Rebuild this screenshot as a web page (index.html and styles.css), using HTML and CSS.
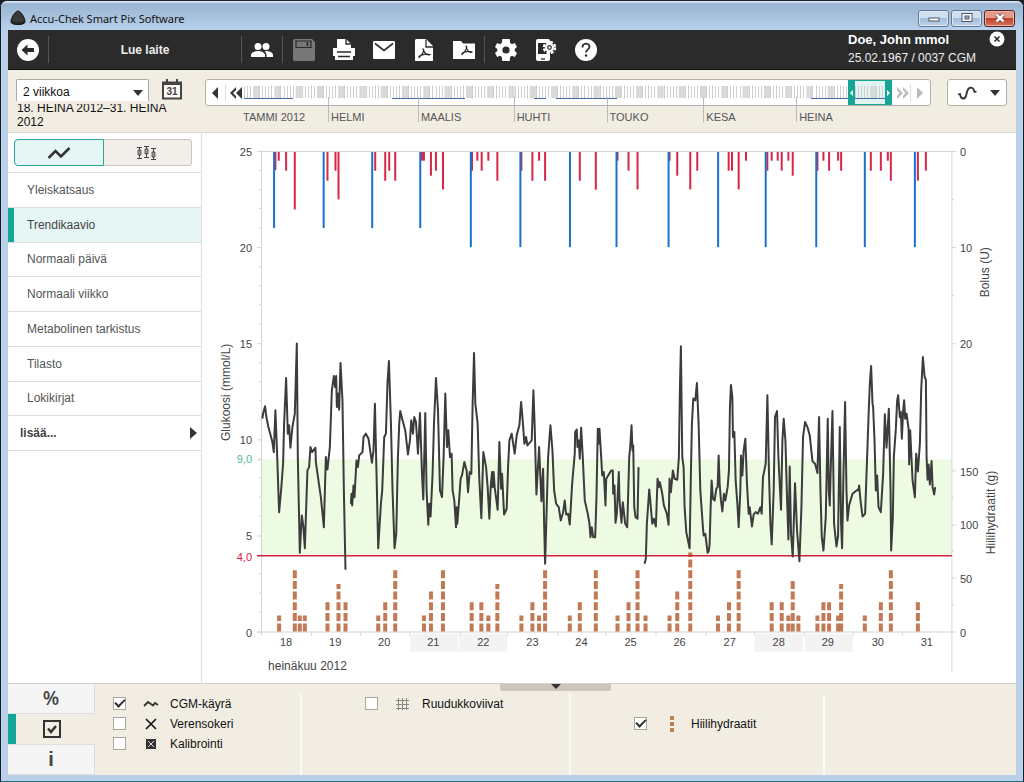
FILE: index.html
```html
<!DOCTYPE html>
<html lang="fi">
<head>
<meta charset="utf-8">
<title>Accu-Chek Smart Pix Software</title>
<link rel="stylesheet" href="styles.css">
</head>
<body>
<div class="window">
  <header class="titlebar">
    <svg class="app-icon" width="16" height="16" viewBox="0 0 16 16"><path d="M8 1C5 1.500 .8 8 1 12c.3 3.500 13.700 3.500 14 0C15.200 8 11 1.500 8 1z" fill="#3a3a3a" stroke="#111"/><path d="M2 12c2 2 10 2 12 0" fill="none" stroke="#222" stroke-width="2"/></svg>
    <span class="app-title">Accu-Chek Smart Pix Software</span>
    <button class="win-btn" aria-label="Minimize"><svg width="14" height="12" viewBox="0 0 14 12"><rect x="2" y="6" width="10" height="3" fill="#fff" stroke="#4a5568"/></svg></button>
    <button class="win-btn" aria-label="Maximize"><svg width="14" height="12" viewBox="0 0 14 12"><rect x="2" y="1.500" width="10" height="8" fill="#fff" stroke="#4a5568"/><rect x="5" y="4" width="4" height="3" fill="#9db5d3" stroke="#4a5568"/></svg></button>
    <button class="win-btn win-close" aria-label="Close"><svg width="14" height="12" viewBox="0 0 14 12"><path d="M3.500 2.500l7 7M10.500 2.500l-7 7" stroke="#5a3a3a" stroke-width="4"/><path d="M3.500 2.500l7 7M10.500 2.500l-7 7" stroke="#fff" stroke-width="2.500"/></svg></button>
  </header>

  <div class="toolbar">
    <button class="tool" aria-label="Takaisin"><svg width="24" height="24" viewBox="0 0 24 24"><circle cx="12" cy="12" r="11" fill="#fff"/><path d="M5.500 12l6-5.500v3.500h6.500v4h-6.500v3.500z" fill="#2b2b2b"/></svg></button>
    <button class="read-device">Lue laite</button>
    <button class="tool" aria-label="Potilaat"><svg width="24" height="24" viewBox="0 0 24 24" fill="#fff"><circle cx="8" cy="8.500" r="3.500"/><circle cx="16" cy="8.500" r="3.500"/><path d="M1 19v-2c0-2.500 4-4 7-4s7 1.500 7 4v2zM16.500 19v-2c0-1.600-.8-2.900-2-3.900 3.500-.4 8.500 1 8.500 3.900v2z"/></svg></button>
    <div class="tool-group">
      <button class="tool" aria-label="Tallenna"><svg width="24" height="24" viewBox="0 0 24 24"><path d="M3 1h17l3 3v17a2 2 0 0 1-2 2H3a2 2 0 0 1-2-2V3a2 2 0 0 1 2-2z" fill="#777"/><path d="M4 3h15v6.500H4z" fill="none" stroke="#2b2b2b" stroke-width="1.200"/><path d="M15.500 4v4" stroke="#2b2b2b" stroke-width="1.600"/></svg></button>
      <button class="tool" aria-label="Tulosta"><svg width="24" height="24" viewBox="0 0 24 24"><path d="M1 10h4v4h14v-4h4v8h-2v4H3v-4H1z" fill="#fff"/><path d="M5 1h9l5 5v9H5z" fill="#fff"/><path d="M14 1v5h5M5 14h14M6 18.500h12" fill="none" stroke="#2b2b2b" stroke-width="1.300"/></svg></button>
      <button class="tool" aria-label="Sähköposti"><svg width="24" height="24" viewBox="0 0 24 24"><rect x="1" y="3" width="22" height="18" rx="1" fill="#fff"/><path d="M3 5.500l9 7 9-7" fill="none" stroke="#2b2b2b" stroke-width="1.600"/></svg></button>
      <button class="tool" aria-label="PDF"><svg width="24" height="24" viewBox="0 0 24 24"><path d="M4 1h10l7 7v15H3V2z" fill="#fff"/><path d="M14 1.500V9h7" fill="none" stroke="#2b2b2b" stroke-width="1.300"/><path d="M11 11c2 0 0 5-4 8.500-1-2 6-4 11-3-2 1.500-6-1-7-5.500z" fill="none" stroke="#2b2b2b" stroke-width="1.200"/></svg></button>
      <button class="tool" aria-label="PDF-kansio"><svg width="24" height="24" viewBox="0 0 24 24"><path d="M1 3h8l2 2.500h12V21H1z" fill="#fff"/><path d="M14 8c2 0 0 5-4 8.500-1-2 6-4 10-2.500-2 1.500-5-1-6-6z" fill="none" stroke="#2b2b2b" stroke-width="1.200"/></svg></button>
    </div>
    <div class="tool-group">
      <button class="tool" aria-label="Asetukset"><svg width="24" height="24" viewBox="0 0 24 24"><path fill="#fff" d="M20.700 13.100a9 9 0 0 0 0-2.200l2.300-1.800-2.200-4-2.800 1.100a8 8 0 0 0-1.900-1.100L15.700 1H8.300l-.5 4.100a8 8 0 0 0-1.900 1.100L3.200 5.100l-2.200 4 2.300 1.800a9 9 0 0 0 0 2.200L1 14.900l2.200 4 2.700-1.100a8 8 0 0 0 1.900 1.100l.5 4.100h7.400l.4-4.100a8 8 0 0 0 1.900-1.100l2.800 1.100 2.200-4z"/><circle cx="12" cy="12" r="3.600" fill="#2b2b2b"/></svg></button>
      <button class="tool" aria-label="Laitteen asetukset"><svg width="24" height="24" viewBox="0 0 24 24"><rect x="2" y="1" width="14" height="22" rx="2" fill="#fff"/><path d="M4 5h9v11H4z" fill="#2b2b2b"/><path d="M7 21h4" stroke="#2b2b2b" stroke-width="1.300"/><circle cx="15.500" cy="9.500" r="4.500" fill="#fff"/><circle cx="15.500" cy="9.500" r="5.500" fill="none" stroke="#fff" stroke-width="2.500" stroke-dasharray="2.800 1.520"/><circle cx="15.500" cy="9.500" r="1.800" fill="none" stroke="#2b2b2b" stroke-width="1.200"/></svg></button>
      <button class="tool" aria-label="Ohje"><svg width="24" height="24" viewBox="0 0 24 24"><circle cx="12" cy="12" r="11" fill="#fff"/><path d="M8.500 9.500c0-5 7-5 7-.8 0 2.600-3.500 2.800-3.500 5.800" fill="none" stroke="#2b2b2b" stroke-width="1.800"/><circle cx="12" cy="17.500" r="1.200" fill="#2b2b2b"/></svg></button>
    </div>
    <div class="patient">
      <strong class="patient-name">Doe, John mmol</strong>
      <span>25.02.1967 / 0037 CGM</span>
    </div>
    <button class="patient-close" aria-label="Sulje potilas"><svg width="16" height="16" viewBox="0 0 16 16"><circle cx="8" cy="8" r="7.500" fill="#fff"/><path d="M5.500 5.500l5 5M10.500 5.500l-5 5" stroke="#2b2b2b" stroke-width="1.600"/></svg></button>
  </div>

  <div class="filters">
    <div class="period">
      <select class="period-select" aria-label="Ajanjakso"><option>2 viikkoa</option></select>
      <div class="period-range"><span>18. HEINA 2012–31. HEINA 2012</span></div>
    </div>
    <button class="plain calendar" aria-label="Kalenteri"><svg width="20" height="22" viewBox="0 0 20 22"><path d="M1 3.500h18v16H1z" fill="#fbf9f5" stroke="#444" stroke-width="2"/><path d="M1 3h18v3H1zM4 0h2v4H4zM14 0h2v4h-2z" fill="#444"/><text x="10" y="16" class="cal-day">31</text></svg></button>
    <div class="timeline">
      <div class="timeline-box">
        <button class="plain tl-prev" aria-label="Edellinen"><svg width="7" height="12" viewBox="0 0 7 12"><path d="M6 0v12L0 6z" fill="#333"/></svg></button>
        <button class="plain tl-prev2" aria-label="Alkuun"><svg width="13" height="12" viewBox="0 0 13 12"><path d="M6 0v3L3 6l3 3v3L0 6zM12 0v12L6 6z" fill="#333"/></svg></button>
        <svg class="strip" id="strip" viewBox="243 80 650 25" preserveAspectRatio="none"></svg>
        <button class="plain tl-next2" aria-label="Loppuun"><svg width="12" height="12" viewBox="0 0 12 12"><path d="M0 0l6 6-6 6V9l2.500-3L0 3zM6 0l6 6-6 6V9l2.500-3L6 3z" fill="#bbb"/></svg></button>
        <button class="plain tl-next" aria-label="Seuraava"><svg width="6" height="12" viewBox="0 0 6 12"><path d="M0 0v12l6-6z" fill="#bbb"/></svg></button>
      </div>
      <div class="months">
        <span class="month m-tammi">TAMMI 2012</span><span class="month m-helmi">HELMI</span><span class="month m-maalis">MAALIS</span><span class="month m-huhti">HUHTI</span><span class="month m-touko">TOUKO</span><span class="month m-kesa">KESA</span><span class="month m-heina">HEINA</span>
      </div>
    </div>
    <button class="curve-menu" aria-label="Käyrä"><svg width="20" height="16" viewBox="0 0 20 16"><path d="M1 9.500L3 9C4 15 8.500 15 9.500 9S13 1.500 16 3.500c1 .7 1.200 2 1.500 3.500l2-.5" fill="none" stroke="#333" stroke-width="1.800"/></svg><svg width="10" height="6" viewBox="0 0 10 6"><path d="M0 0h10L5 6z" fill="#333"/></svg></button>
  </div>

  <main class="content">
    <aside class="sidebar">
      <div class="view-tabs">
        <button class="view-tab active" aria-label="Käyrä"><svg width="24" height="14" viewBox="0 0 24 14"><path d="M1.500 12l7-7 5.500 5.500L22.500 2" fill="none" stroke="#333" stroke-width="2.500"/></svg></button>
        <button class="view-tab" aria-label="Laatikot"><svg width="20" height="14" viewBox="0 0 20 14"><path d="M0 1.500h5M0 12.500h5M2.500 1v12M7 .5h5M7 11.500h5M9.500 0v12M14 2.500h5M14 13.500h5M16.500 2v12" stroke="#444" fill="none"/><path d="M1 4h3v5H1zM8 3h3v5H8zM15 6h3v5h-3z" fill="#999" stroke="#444" stroke-width=".8"/></svg></button>
      </div>
      <nav class="menu">
        <a href="#" class="item">Yleiskatsaus</a>
        <a href="#" class="item current">Trendikaavio</a>
        <a href="#" class="item">Normaali päivä</a>
        <a href="#" class="item">Normaali viikko</a>
        <a href="#" class="item">Metabolinen tarkistus</a>
        <a href="#" class="item">Tilasto</a>
        <a href="#" class="item">Lokikirjat</a>
        <a href="#" class="item more">lisää...<svg width="7" height="12" viewBox="0 0 7 12"><path d="M0 0v12l7-6z" fill="#333"/></svg></a>
      </nav>
    </aside>
    <section class="chart-panel">
      <svg class="chart" id="chart" viewBox="203 133 813 549" role="img" aria-label="Trendikaavio"></svg>
    </section>
  </main>

  <footer class="legend">
    <button class="legend-handle" aria-label="Piilota"><svg width="10" height="5" viewBox="0 0 10 5"><path d="M0 0h10L5 5z" fill="#333"/></svg></button>
    <div class="legend-tabs">
      <button class="legend-tab percent">%</button>
      <button class="legend-tab selected" aria-label="Valinnat"><svg width="18" height="18" viewBox="0 0 18 18"><rect x="1" y="1" width="16" height="16" fill="none" stroke="#333" stroke-width="2"/><path d="M5 8.500l3 3.500 5-6" fill="none" stroke="#333" stroke-width="2.500"/></svg></button>
      <button class="legend-tab">i</button>
    </div>
    <div class="legend-col first">
      <label class="opt"><input type="checkbox" class="box" checked><span class="sym"><svg width="16" height="8" viewBox="0 0 16 8"><path d="M1 6l4-4 5 3.500L12 3l3 2" fill="none" stroke="#333" stroke-width="1.800"/></svg></span>CGM-käyrä</label>
      <label class="opt"><input type="checkbox" class="box"><span class="sym"><svg width="12" height="12" viewBox="0 0 12 12"><path d="M1 1l10 10M11 1L1 11" stroke="#111" stroke-width="1.600"/></svg></span>Verensokeri</label>
      <label class="opt"><input type="checkbox" class="box"><span class="sym"><svg width="10" height="10" viewBox="0 0 10 10"><path d="M0 0h10v10H0z" fill="#333"/><path d="M2 2l6 6M8 2L2 8" stroke="#ddd"/></svg></span>Kalibrointi</label>
    </div>
    <div class="legend-col second">
      <label class="opt"><input type="checkbox" class="box"><span class="sym"><svg width="14" height="12" viewBox="0 0 14 12"><path d="M0 2.500h13M0 6.500h13M0 10.500h13M2.500 0v12M6.500 0v12M10.500 0v12" stroke="#888"/></svg></span>Ruudukkoviivat</label>
    </div>
    <div class="legend-col third">
      <label class="opt"><input type="checkbox" class="box" checked><span class="sym"><svg width="4" height="16" viewBox="0 0 4 16"><path d="M0 0h4v4H0zM0 6h4v4H0zM0 12h4v4H0z" fill="#c17a55"/></svg></span>Hiilihydraatit</label>
    </div>
    <div class="legend-col last"></div>
  </footer>
</div>
<script src="chart.js"></script>
</body>
</html>
```
FILE: styles.css
```css
* { box-sizing: border-box; }
body { margin: 0; background: #1a1f26; font-family: "Liberation Sans", Arial, sans-serif; font-size: 12px; color: #222; }
button { font: inherit; color: inherit; padding: 0; cursor: pointer; }
svg { display: block; }
.plain { border: 0; background: none; }

.window { min-height: 100vh; display: flex; flex-direction: column; padding: 0 7px 6px; background: #b9d0e8; border: 1px solid #14202c; border-bottom: 2px solid #1b6f80; border-radius: 7px 7px 0 0; }
.titlebar { height: 29px; margin: 0 -7px; padding: 5px 8px 0 9px; display: flex; align-items: center; gap: 2px; background: linear-gradient(#e8f1fa 0, #99b4d1 3px, #b8d1ec); border-radius: 6px 6px 0 0; }
.app-title { flex: 1; margin-left: 2px; font-family: "Noto Sans", "Open Sans", sans-serif; font-size: 11px; color: #111; }
.win-btn { width: 31px; height: 17px; display: flex; align-items: center; justify-content: center; border: 1px solid #5f7895; border-radius: 3px; background: linear-gradient(#cfdff0 50%, #a5bedb 50%, #bdd3ec); box-shadow: inset 0 0 0 1px #dfeaf6; }
.win-close { border-color: #5c1f1c; background: linear-gradient(#e29a8b 50%, #c3402b 50%, #d4745c); box-shadow: inset 0 0 0 1px #eab3a7; }

.toolbar { height: 40px; display: flex; align-items: stretch; background: #2b2b2b; border-bottom: 1px solid #111; color: #fff; position: relative; }
.tool { width: 40px; display: flex; align-items: center; justify-content: center; border: 0; background: none; }
.read-device { width: 194px; margin: 6px 0; border: solid #555; border-width: 0 1px; background: none; font-weight: bold; color: #eee; }
.tool-group { display: flex; padding-left: 2px; position: relative; }
.tool-group::before { content: ""; position: absolute; left: 0; top: 6px; bottom: 6px; border-left: 1px solid #555; }
.patient { margin-left: auto; width: 168px; padding-top: 1px; line-height: 18px; display: flex; flex-direction: column; color: #eee; white-space: nowrap; }
.patient-name { font-size: 13px; color: #fff; }
.patient-close { position: absolute; right: 11px; top: 1px; border: 0; background: none; }

.filters { height: 63px; display: flex; align-items: flex-start; padding: 9px 9px 0 8px; background: #f2ede3; border-bottom: 1px solid #dcd8d0; }
.period { width: 154px; flex: none; margin-right: -8px; position: relative; }
.period::after { content: ""; position: absolute; left: 117px; top: 11px; border: 5px solid transparent; border-top: 6px solid #333; border-bottom: 0; pointer-events: none; }
.period-select { appearance: none; display: block; width: 133px; height: 22px; padding: 3px 6px 0; border: 1px solid #aaa; border-bottom: 0; border-radius: 2px 2px 0 0; font: inherit; color: #111; background: #fff; }
.period-range { height: 22px; margin-top: 3px; padding-left: 1px; display: flex; align-items: center; overflow: hidden; line-height: 14px; color: #111; }
.calendar { width: 20px; flex: none; margin-right: 23px; }
.cal-day { font-size: 10px; font-weight: bold; text-anchor: middle; fill: #444; }
.timeline { flex: 1; display: grid; min-width: 0; }
.timeline-box, .months { grid-area: 1 / 1; }
.timeline-box { height: 27px; display: flex; align-items: center; background: #fff; border: 1px solid #b5b1a8; border-radius: 3px; }
.tl-prev { width: 20px; height: 17px; padding-left: 6px; border-right: 1px solid #ddd; }
.tl-prev2 { width: 17px; padding-left: 4px; }
.strip { flex: 1; min-width: 0; height: 25px; }
.tl-next2 { width: 18px; height: 17px; padding-left: 4px; border-right: 1px solid #ddd; }
.tl-next { width: 19px; padding-left: 6px; }
.months { height: 43px; padding-left: 38px; display: flex; align-items: flex-end; pointer-events: none; }
.month { flex: 1 1 0; min-width: 0; height: 25px; padding: 14px 0 0 2px; border-left: 1px solid #bbb; font-size: 11px; line-height: 13px; color: #555; white-space: nowrap; }
.m-tammi { flex-grow: 87; border-left: 0; padding-left: 0; }
.m-helmi { flex-grow: 89; }
.m-maalis { flex-grow: 95; }
.m-huhti { flex-grow: 92; }
.m-touko { flex-grow: 96; }
.m-kesa { flex-grow: 92; }
.m-heina { flex-grow: 135; }
.curve-menu { width: 60px; height: 27px; margin-left: 17px; flex: none; display: flex; align-items: center; justify-content: space-between; padding: 0 6px 0 9px; background: #fff; border: 1px solid #b5b1a8; border-radius: 3px; }

.content { flex: 1; display: flex; background: #fff; }
.sidebar { width: 194px; flex: none; border-right: 1px solid #ddd; }
.view-tabs { height: 39px; display: flex; padding: 6px 9px 6px 6px; }
.view-tab { flex: 1; display: flex; align-items: center; justify-content: center; border: 1px solid #c9c4be; border-left: 0; border-radius: 0 4px 4px 0; background: #f2eeea; }
.view-tab.active { border: 1px solid #2ba39a; border-radius: 4px 0 0 4px; background: #e6f6f5; }
.menu { height: 279px; display: grid; grid-auto-rows: 1fr; border-top: 1px solid #ddd; }
.item { display: flex; align-items: center; justify-content: space-between; padding: 0 4px 0 19px; border-bottom: 1px solid #ddd; color: #555; text-decoration: none; }
.item.current { box-shadow: inset 6px 0 #12a598; background: #e6f6f5; color: #444; }
.item.more { padding-left: 12px; font-weight: bold; color: #444; }
.chart-panel { flex: 1; min-width: 0; }
.chart { width: 100%; height: auto; }

.axis { stroke: #d4d4d4; fill: none; }
.zone { fill: #edfbe3; }
.limit { stroke: #d4213f; stroke-width: 1.4; }
.weekend { fill: #f3f3f3; }
.lbl { font-size: 11px; fill: #444; }
.lbl-end { text-anchor: end; }
.lbl-mid { text-anchor: middle; }
.lbl-title { font-size: 12px; }
.lbl-high { fill: #4fc096; }
.lbl-low { fill: #d4213f; }
.basal { stroke: #1872cc; stroke-width: 2; }
.bolus { stroke: #d6274a; stroke-width: 2; }
.carbs { stroke: #c17a55; stroke-width: 4; stroke-dasharray: 8 2.66; }
.cgm { fill: none; stroke: #3c3c3c; stroke-width: 2; stroke-linejoin: round; }

.legend { height: 92px; display: grid; grid-template-columns: 87px 207fr 269fr 254fr 191fr; background: #f2ede3; border-top: 1px solid #d5d2ca; position: relative; }
.legend-handle { position: absolute; top: 0; left: calc(50% - 12px); width: 111px; height: 7px; border: 0; border-radius: 0 0 2px 2px; background: #cbc5ba; display: flex; justify-content: center; }
.legend-tabs { display: grid; grid-template-rows: 30px 31px 1fr; }
.legend-tab { display: flex; align-items: center; justify-content: center; border: solid #ddd; border-width: 0 1px 1px 0; background: #f5f5f5; font-size: 20px; font-weight: bold; color: #444; }
.legend-tab.percent { font-family: "Open Sans", "Noto Sans", sans-serif; font-size: 19px; font-weight: 600; }
.legend-tab.selected { box-shadow: inset 8px 0 #12a598; border-right: 0; background: #f2ede3; }
.legend-col { margin-top: 10px; border-right: 2px solid #fbf9f5; }
.first { padding-left: 18px; }
.second { padding-left: 63px; }
.third { padding: 20px 0 0 63px; }
.last { border-right: 0; }
.opt { height: 20px; display: flex; align-items: center; color: #111; }
.box { appearance: none; width: 13px; height: 13px; margin: 0; border: 1px solid #aaa69e; background: #fff; display: grid; place-items: center; }
.box:checked::before { content: ""; width: 8px; height: 4px; margin-bottom: 3px; border: solid #333; border-width: 0 0 2px 2px; transform: rotate(-45deg); }
.sym { width: 44px; padding-left: 6px; display: flex; justify-content: center; }
```
FILE: chart.js
```js
const NS = 'http://www.w3.org/2000/svg';
const chart = document.getElementById('chart');
const strip = document.getElementById('strip');

function add(parent, tag, attrs, text) {
  const el = document.createElementNS(NS, tag);
  for (const k in attrs) el.setAttribute(k, attrs[k]);
  if (text !== undefined) el.textContent = text;
  parent.appendChild(el);
  return el;
}
const line = (cls, x1, y1, x2, y2) => add(chart, 'line', { class: cls, x1, y1, x2, y2 });
const label = (cls, x, y, t, extra) => add(chart, 'text', Object.assign({ class: 'lbl ' + cls, x, y }, extra), t);

/* Target range and weekend shading */
add(chart, 'rect', { class: 'zone', x: 263, y: 459, width: 689, height: 96 });
for (const [x, w] of [[411, 48], [460, 48], [755, 48], [805, 48]])
  add(chart, 'rect', { class: 'weekend', x, y: 633, width: w, height: 18 });

/* Axes */
line('axis', 258, 151.5, 956, 151.5);
line('axis', 258, 631.5, 956, 631.5);
line('axis', 262.5, 151, 262.5, 635);
line('axis', 952, 151, 952, 671);
for (let i = 0; i <= 25; i++) {
  const y = Math.round(151.5 + i * 19.2) - 0.5;
  line('axis', i % 5 ? 260 : 258, y, 262, y);
}
[0, 10, 20].forEach((v, i) => {
  line('axis', 952, 151.5 + i * 96, 956, 151.5 + i * 96);
  label('', 960, 156 + i * 96, v);
});
[199.5, 295.5].forEach(y => line('axis', 952, y, 954, y));
for (let i = 1; i <= 6; i++) {
  const y = Math.round(631.5 - i * 26.67) - 0.5;
  line('axis', 952, y, i % 2 ? 954 : 956, y);
}
[[0, 636], [50, 582], [100, 529], [150, 476]].forEach(([v, y]) => label('', 960, y, v));
[[25, 156], [20, 252], [15, 348], [10, 444], [5, 540], [0, 636]].forEach(([v, y]) => label('lbl-end', 253, y, v));
label('lbl-end lbl-high', 253, 463, '9,0');
label('lbl-end lbl-low', 253, 560, '4,0');
line('axis', 258, 459.5, 262, 459.5);
[312, 361, 410, 460, 508, 558, 606, 656, 706, 754, 804, 853, 902].forEach(x => line('axis', x + .5, 632, x + .5, 635));
[287, 336, 385, 434, 484, 533, 582, 631, 680, 730, 779, 828, 878, 927].forEach((x, i) => label('lbl-mid', x, 645, 18 + i));
label('lbl-title', 269, 669, 'heinäkuu 2012');
label('lbl-title lbl-mid', 0, 0, 'Glukoosi (mmol/L)', { transform: 'translate(231 392) rotate(-90)' });
label('lbl-title lbl-mid', 0, 0, 'Bolus (U)', { transform: 'translate(989 272) rotate(-90)' });
label('lbl-title lbl-mid', 0, 0, 'Hiilihydraatit (g)', { transform: 'translate(995 512) rotate(-90)' });

/* Data is stored at three units per pixel; each block has its own x origin. */
const ORIGINS = [210, 460, 710];
const px = (block, x) => ORIGINS[block] + x / 3;

const bolus = [
  [199,90,209,62,231,92,257,208,355,122,379,92,388,178,498,92,528,122,540,92,558,122,638,62,644,62,665,107,680,92,701,148],
  [38,92,54,62,67,92,87,62,114,122,186,92,219,122,239,62,257,122,361,122,409,149,474,62,507,92,534,148,630,62,653,107,692,148,713,92],
  [57,92,67,92,87,148,109,62,173,92,186,62,204,62,216,92,236,62,249,107,323,92,341,62,358,92,385,62,394,92,483,92,513,92,534,62,543,122,624,122,648,92]
];
bolus.forEach((b, n) => { for (let i = 0; i < b.length; i += 2) line('bolus', px(n, b[i]), 152, px(n, b[i]), 140 + b[i + 1] / 3); });
[275, 324.5, 373, 421, 471.5, 521, 570.5, 617, 669, 718.5, 766, 816.5, 865, 915].forEach((x, i) => line('basal', x, 152, x, i < 4 ? 228 : 247));

const carbs = [
  [210,675,257,538,272,675,287,675,355,633,388,580,409,633,507,675,528,633,558,538,644,675,665,603,701,538],
  [37,633,66,633,87,675,114,580,186,675,219,633,239,675,257,538,331,675,361,633,409,538,474,675,507,633,534,538,558,675,630,675,653,603,692,486],
  [25,675,58,633,87,538,186,633,216,633,236,675,249,570,266,675,323,675,341,633,358,633,385,675,394,580,465,675,513,633,543,538,624,633]
];
carbs.forEach((b, n) => { for (let i = 0; i < b.length; i += 2) line('carbs', px(n, b[i]), 631, px(n, b[i]), 390 + b[i + 1] / 3); });
line('limit', 258, 555.3, 952, 555.3);

/* CGM trace: 'M' starts a new run after a sensor gap */
const cgm = [
  'M 160,85 162,70 168,48 172,80 178,110 186,140 190,155 194,185 199,60 204,190 210,365 216,300 222,220 225,100 231,-37 236,130 240,105 244,172 250,110 257,70 263,-140 266,200 272,487 278,375 283,410 287,473 295,240 300,230 304,170 309,185 319,172 320,215 335,320 344,410 350,200 355,237 362,170 368,0 374,-43 378,-10 381,-43 383,50 387,10 390,58 394,-82 400,30 404,300 409,538 M 425,340 427,310 429,345 433,285 436,320 442,210 446,230 450,195 460,185 463,140 470,130 478,145 488,217 493,180 497,40 502,250 507,473 515,340 519,300 525,140 530,130 535,-25 539,-88 545,100 550,300 556,473 561,430 566,200 570,100 573,62 580,90 588,120 596,192 602,150 606,90 611,130 615,80 620,95 626,190 632,68 638,250 642,327 648,68 652,300 657,403 660,340 664,378 670,250 674,100 680,-37 686,60 692,300 698,320 703,200 708,10 713,170 717,120 722,200 727,190 730,300 735,330 740,410 742,350 744,400 750,320',
  '0,320 4,265 8,255 15,215 22,240 26,305 31,245 36,250 40,40 44,-112 48,40 55,100 60,270 66,383 72,185 80,230 85,290 90,385 94,290 98,245 100,290 103,245 106,290 115,358 120,155 125,295 128,250 134,372 142,355 146,230 150,150 157,130 166,190 172,135 180,105 185,35 190,90 195,160 200,140 204,165 217,150 222,0 226,110 231,312 239,170 246,332 251,235 254,400 257,520 262,350 266,200 273,105 279,180 284,300 290,340 298,350 304,390 311,365 316,330 320,372 326,370 331,402 338,280 346,190 347,125 352,118 354,170 358,150 361,205 365,112 370,200 376,330 385,370 390,400 393,440 397,410 401,440 407,440 411,320 415,115 417,160 420,115 425,200 428,255 433,245 438,345 440,265 455,240 460,240 461,310 465,285 468,397 472,370 478,245 480,330 486,397 490,335 497,400 503,410 509,200 512,170 516,105 519,180 521,165 524,350 528,380 534,385 537,230 M 555,520 559,505 562,400 569,297 573,340 578,400 583,385 589,408 594,265 598,290 601,275 608,310 613,345 622,370 627,403 630,265 634,305 640,240 645,265 653,268 658,200 661,0 664,-132 668,200 672,230 675,350 680,425 690,473 694,250 697,100 701,25 707,30 712,-22 717,100 722,300 730,410 732,435 737,430 744,487 748,480',
  '0,460 3,350 6,270 10,325 15,330 20,295 24,290 27,195 30,280 34,330 38,363 43,310 47,330 54,290 58,240 61,50 64,-16 68,20 70,140 74,125 78,270 83,340 87,410 92,300 94,195 98,255 102,180 107,145 112,280 117,370 120,350 127,408 132,372 138,365 145,370 152,350 156,370 160,260 168,220 173,15 178,250 182,400 186,462 192,300 196,80 202,62 206,200 214,358 218,150 222,85 227,150 232,320 236,447 240,228 244,430 249,498 256,278 262,420 269,512 275,350 280,140 286,95 293,110 300,135 308,212 316,220 323,248 328,80 332,300 336,440 341,480 348,380 354,85 357,300 360,345 364,200 368,62 373,400 380,468 385,435 390,110 394,400 397,473 401,250 406,35 410,300 413,390 418,345 428,310 443,298 446,300 448,285 452,330 458,378 466,370 472,200 476,80 480,-20 484,-73 488,40 490,50 494,150 498,300 502,255 506,350 513,365 520,250 525,72 530,172 537,55 542,300 544,480 549,380 552,200 558,115 562,30 565,15 570,80 573,65 576,145 580,60 583,30 586,85 590,70 596,115 598,222 601,120 608,270 615,320 619,190 624,243 630,160 634,0 639,-100 644,-40 648,-32 650,200 653,268 656,222 660,282 665,212 668,290 673,312 676,290'
];
const trace = cgm.map((s, n) => s.split(' ').map(p => {
  if (p === 'M') return p;
  const [x, y] = p.split(',').map(Number);
  return px(n, x).toFixed(1) + ',' + (390 + y / 3).toFixed(1);
}).join(' ')).join(' ');
add(chart, 'path', { class: 'cgm', d: trace });

/* Timeline strip: one tick per day, weekends filled */
add(strip, 'rect', { x: 855, y: 81, width: 30, height: 23, fill: '#e2f4f2' });
for (let d = 0, x = 244; x < 884; d++, x += 3.04) {
  const wide = d % 7 === 3 || d % 7 === 4;
  add(strip, 'rect', { x: wide ? x : Math.round(x), y: 86, width: wide ? 3.1 : 1, height: 12, fill: wide ? '#d8d8d8' : '#d0d0d0' });
}
for (const [a, b] of [[244, 293], [392, 465], [534, 546], [556, 617], [811, 885]])
  add(strip, 'rect', { x: a, y: 98, width: b - a, height: 1, fill: '#4668a8' });
add(strip, 'path', { d: 'M848 80h44v25h-44zM855 81v23h30v-23z', fill: '#16a595', 'fill-rule': 'evenodd' });
add(strip, 'path', { d: 'M853 90v6l-3-3zM887 90v6l3-3z', fill: '#fff' });
```
